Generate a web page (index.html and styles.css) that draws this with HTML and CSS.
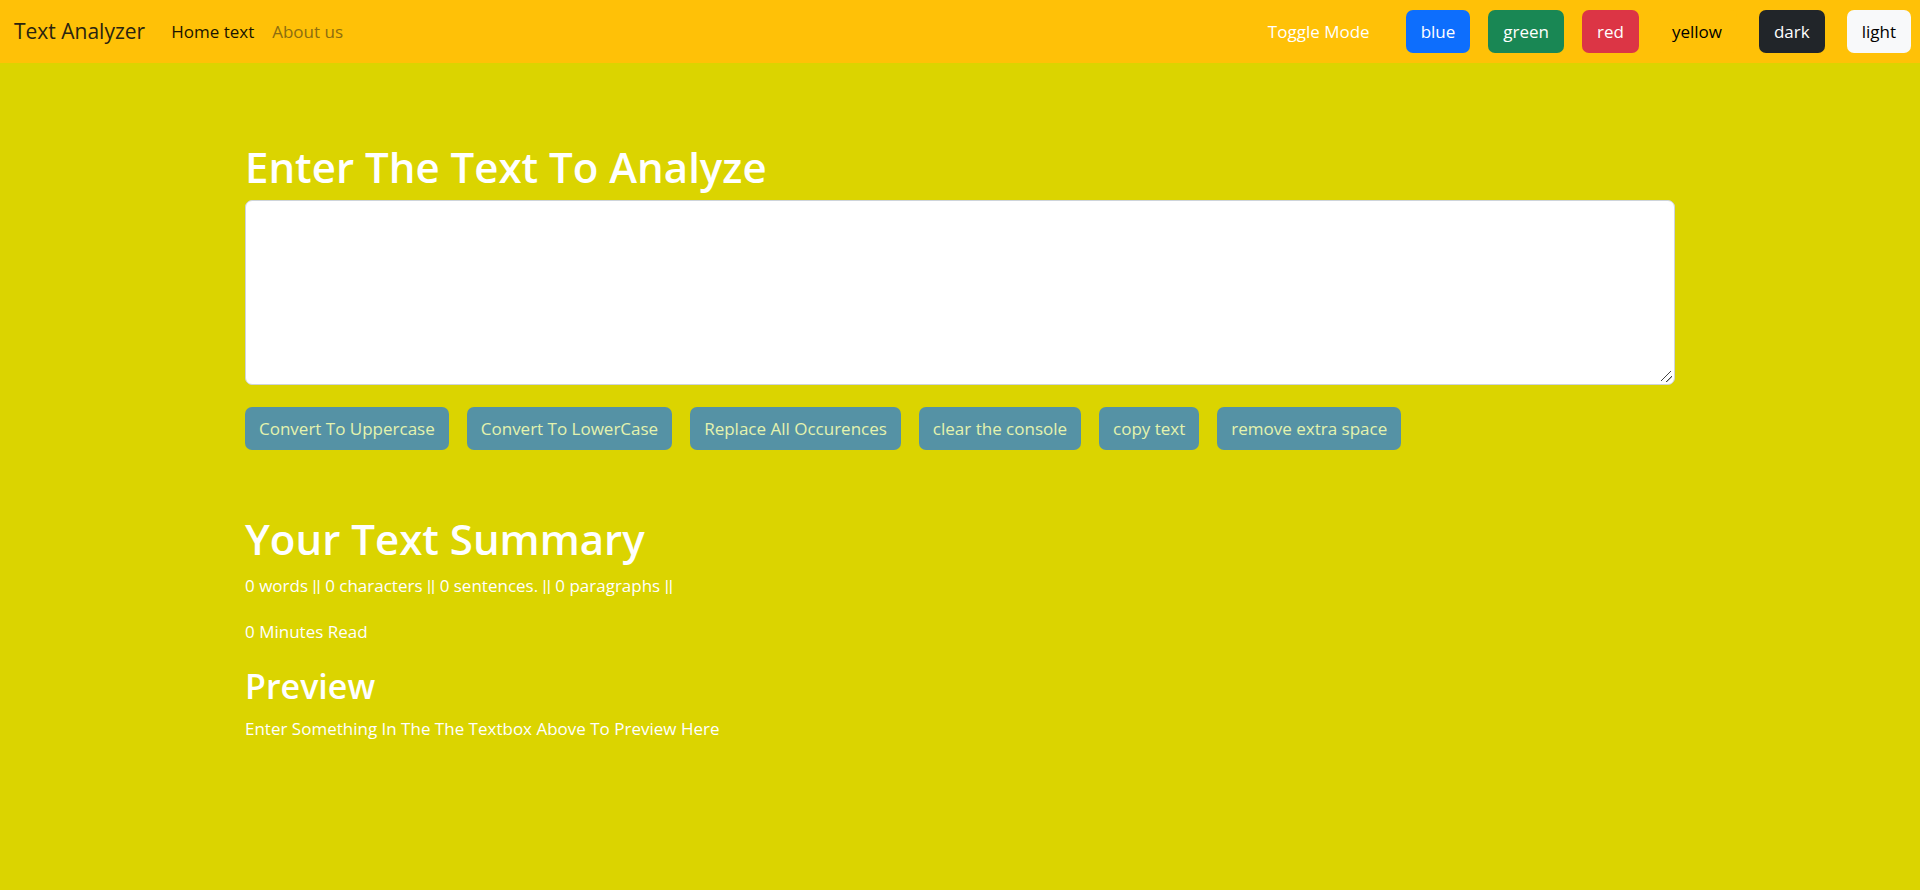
FILE: index.html
```html
<!DOCTYPE html>
<html lang="en">
<head>
<meta charset="utf-8">
<meta name="viewport" content="width=device-width, initial-scale=1">
<title>Text Analyzer</title>
<link rel="stylesheet" href="styles.css">
</head>
<body>
<nav class="navbar">
  <a class="brand" href="#">Text Analyzer</a>
  <div class="nav-links">
    <a class="nav-link active" href="#">Home text</a>
    <a class="nav-link" href="#">About us</a>
  </div>
  <div class="modes">
    <span class="mode-label">Toggle Mode</span>
    <button type="button" class="btn mode blue">blue</button>
    <button type="button" class="btn mode green">green</button>
    <button type="button" class="btn mode red">red</button>
    <button type="button" class="btn mode yellow">yellow</button>
    <button type="button" class="btn mode dark">dark</button>
    <button type="button" class="btn mode light">light</button>
  </div>
</nav>
<main class="container">
  <section class="editor">
    <h1 class="title"><label for="text">Enter The Text To Analyze</label></h1>
    <textarea class="text-box" id="text" rows="6"></textarea>
    <div class="actions">
      <button type="button" class="btn action">Convert To Uppercase</button>
      <button type="button" class="btn action">Convert To LowerCase</button>
      <button type="button" class="btn action">Replace All Occurences</button>
      <button type="button" class="btn action">clear the console</button>
      <button type="button" class="btn action">copy text</button>
      <button type="button" class="btn action">remove extra space</button>
    </div>
  </section>
  <section class="summary">
    <h1 class="title">Your Text Summary</h1>
    <p class="line">0 words <span class="bars">||</span> 0 characters <span class="bars">||</span> 0 sentences. <span class="bars">||</span> 0 paragraphs <span class="bars">||</span></p>
    <p class="line">0 Minutes Read</p>
    <h2 class="subtitle">Preview</h2>
    <p class="line">Enter Something In The The Textbox Above To Preview Here</p>
  </section>
</main>
</body>
</html>
```
FILE: styles.css
```css
* {
  box-sizing: border-box;
}

body {
  margin: 0;
  background: #dbd400;
  color: #fff;
  font-family: "Segoe UI", "Open Sans", "Noto Sans", sans-serif;
  font-size: 17px;
  line-height: 27px;
}

.navbar {
  display: flex;
  align-items: center;
  padding: 10px 9px 10px 14px;
  background: #ffc107;
}

.brand {
  margin-right: 17px;
  color: #2a2410;
  font-size: 21px;
  text-decoration: none;
}

.nav-links {
  display: flex;
}

.nav-link {
  padding: 8px 9px;
  color: #8c6d10;
  text-decoration: none;
}

.nav-link.active {
  color: #1a1400;
}

.modes {
  display: flex;
  align-items: center;
  gap: 18px;
  margin-left: auto;
}

.mode-label {
  margin-right: 18px;
}

.btn {
  padding: 8px 14px;
  border: 0;
  border-radius: 7px;
  color: #fff;
  font: inherit;
  cursor: pointer;
}

.mode {
  padding: 8px 15px;
}

.blue {
  background: #0d6efd;
}

.green {
  background: #198754;
}

.red {
  background: #dc3545;
}

.yellow {
  margin-right: 4px;
  background: #ffc107;
  color: #000;
}

.dark {
  margin-right: 4px;
  background: #212529;
}

.light {
  background: #f8f9fa;
  color: #000;
}

.container {
  max-width: 1458px;
  margin: 0 auto;
  padding: 77px 14px 24px;
}

.title,
.subtitle {
  margin: 0 0 6px;
  font-weight: 600;
}

.title {
  font-size: 42px;
  line-height: 54px;
}

.subtitle {
  font-size: 34px;
  line-height: 46px;
}

.text-box {
  display: block;
  width: 100%;
  height: 185px;
  padding: 7px 14px;
  border: 1px solid #ced4da;
  border-radius: 7px;
  background: #fff;
  color: #212529;
  font: inherit;
  resize: vertical;
}

.text-box::-webkit-resizer {
  background: linear-gradient(135deg, transparent 41%, #444 43% 48%, transparent 50% 69%, #444 71% 76%, transparent 78%) 2px 2px / 11px 11px no-repeat;
}

.actions {
  display: flex;
  flex-wrap: wrap;
  gap: 18px;
  margin-top: 22px;
}

.action {
  background: #5592a5;
  color: #e4f3ae;
}

.summary {
  margin-top: 62px;
}

.line {
  margin: 0 0 18px;
}

.bars {
  font-family: Roboto, sans-serif;
}
```
